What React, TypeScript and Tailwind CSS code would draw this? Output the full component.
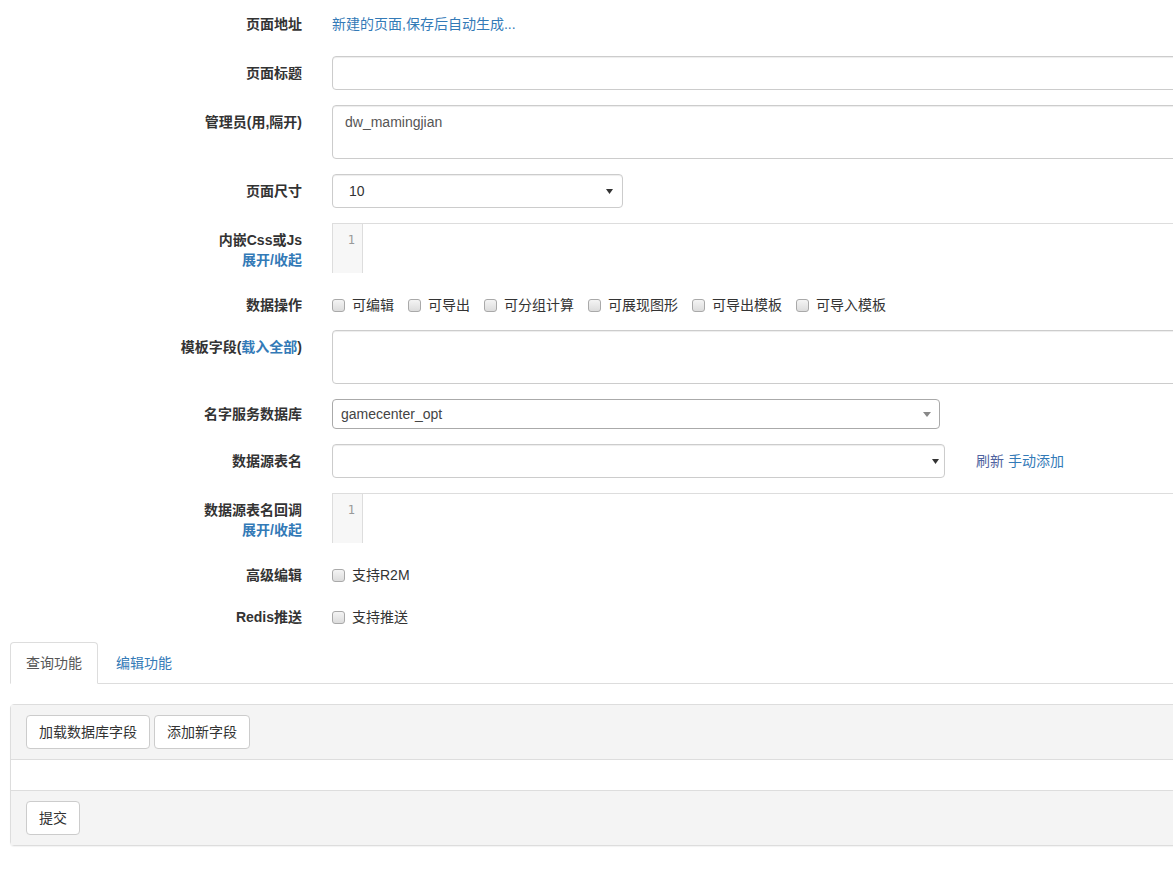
import React from "react";

const font = { fontFamily: '"Liberation Sans", "Noto Sans CJK SC", sans-serif' };

function Label({ children }: { children: React.ReactNode }) {
  return (
    <div className="w-[302px] shrink-0 pt-[7px] text-right text-[14px] font-bold leading-[20px] text-[#333]">
      {children}
    </div>
  );
}

function Row({ label, children }: { label: React.ReactNode; children: React.ReactNode }) {
  return (
    <div className="mb-[15px] flex">
      <Label>{label}</Label>
      <div className="ml-[30px] flex-1">{children}</div>
    </div>
  );
}

function Check({ text }: { text: string }) {
  return (
    <span className="flex items-center">
      <span className="h-[13px] w-[13px] rounded-[3px] border border-[#a9a9a9] bg-gradient-to-b from-[#f4f4f4] to-[#dcdcdc]" />
      <span className="ml-[7px] text-[14px] leading-[20px] text-[#333]">{text}</span>
    </span>
  );
}

function Editor() {
  return (
    <div className="flex h-[50px] border-l border-t border-[#ddd]">
      <div className="w-[30px] border-r border-[#ddd] bg-[#f7f7f7] pr-[7px] pt-[6px] text-right font-mono text-[12px] leading-[20px] text-[#999]" style={{ fontFamily: '"DejaVu Sans Mono", monospace' }}>
        1
      </div>
      <div className="flex-1 bg-white" />
    </div>
  );
}

function Arrow({ color, w = 8, h = 5 }: { color: string; w?: number; h?: number }) {
  return (
    <svg width={w} height={h} viewBox={`0 0 ${w} ${h}`}>
      <path d={`M0 0 L${w} 0 L${w / 2} ${h} Z`} fill={color} />
    </svg>
  );
}

const inputCls =
  "rounded-[4px] border border-[#ccc] bg-white shadow-[inset_0_1px_1px_rgba(0,0,0,0.075)]";

export default function App() {
  return (
    <div className="w-full overflow-hidden bg-white pb-[27px]" style={font}>
      <div className="w-[1200px] pt-[7px]">
        <Row label="页面地址">
          <div className="pt-[7px] pb-[7px] text-[14px] leading-[20px] text-[#337ab7]">新建的页面,保存后自动生成...</div>
        </Row>
        <Row label="页面标题">
          <div className={`${inputCls} h-[34px]`} />
        </Row>
        <Row label="管理员(用,隔开)">
          <div className={`${inputCls} h-[54px] px-[12px] py-[6px] text-[14px] leading-[20px] text-[#555]`}>dw_mamingjian</div>
        </Row>
        <Row label="页面尺寸">
          <div className={`${inputCls} flex h-[34px] w-[291px] items-center justify-between pl-[16px] pr-[9px] text-[14px] text-[#333]`}>
            <span>10</span>
            <Arrow color="#333" w={7} h={5} />
          </div>
        </Row>
        <Row
          label={
            <>
              <div>内嵌Css或Js</div>
              <div className="text-[#337ab7]">展开/收起</div>
            </>
          }
        >
          <Editor />
        </Row>
        <div className="mb-[15px] flex">
          <Label>数据操作</Label>
          <div className="ml-[30px] flex gap-[14px] pt-[7px]">
            {["可编辑", "可导出", "可分组计算", "可展现图形", "可导出模板", "可导入模板"].map((t) => (
              <Check key={t} text={t} />
            ))}
          </div>
        </div>
        <Row
          label={
            <>
              模板字段(<span className="text-[#337ab7]">载入全部</span>)
            </>
          }
        >
          <div className={`${inputCls} h-[54px]`} />
        </Row>
        <div className="mb-[15px] flex">
          <div className="w-[302px] shrink-0 pt-[5px] text-right text-[14px] font-bold leading-[20px] text-[#333]">名字服务数据库</div>
          <div className="ml-[30px]">
            <div className="flex h-[30px] w-[608px] items-center justify-between rounded-[4px] border border-[#aaa] bg-white pl-[8px] pr-[8px] text-[14px] text-[#444]">
              <span>gamecenter_opt</span>
              <Arrow color="#888" />
            </div>
          </div>
        </div>
        <Row label="数据源表名">
          <div className="flex items-center">
            <div className={`${inputCls} flex h-[34px] w-[613px] items-center justify-end pr-[5px]`}>
              <Arrow color="#333" w={7} h={5} />
            </div>
            <div className="ml-[31px] text-[14px] leading-[20px]">
              <span className="text-[#4f63a0]">刷新</span> <span className="text-[#337ab7]">手动添加</span>
            </div>
          </div>
        </Row>
        <Row
          label={
            <>
              <div>数据源表名回调</div>
              <div className="text-[#337ab7]">展开/收起</div>
            </>
          }
        >
          <Editor />
        </Row>
        <div className="mb-[15px] flex">
          <Label>高级编辑</Label>
          <div className="ml-[30px] flex pt-[7px]">
            <Check text="支持R2M" />
          </div>
        </div>
        <div className="mb-[15px] flex">
          <Label>Redis推送</Label>
          <div className="ml-[30px] flex pt-[7px]">
            <Check text="支持推送" />
          </div>
        </div>

        <div className="pl-[10px]">
          <div className="flex border-b border-[#ddd]">
            <div className="-mb-px rounded-t-[4px] border border-[#ddd] border-b-white bg-white px-[15px] py-[10px] text-[14px] leading-[20px] text-[#555]">
              查询功能
            </div>
            <div className="-mb-px ml-[2px] border border-transparent px-[15px] py-[10px] text-[14px] leading-[20px] text-[#337ab7]">
              编辑功能
            </div>
          </div>

          <div className="mt-[20px] rounded-[4px] border border-[#ddd] shadow-[0_1px_1px_rgba(0,0,0,0.05)]">
            <div className="flex gap-[4px] border-b border-[#ddd] bg-[#f4f4f4] px-[15px] py-[10px]">
              <button className="h-[34px] rounded-[4px] border border-[#ccc] bg-white px-[12px] text-[14px] text-[#333]">加载数据库字段</button>
              <button className="h-[34px] rounded-[4px] border border-[#ccc] bg-white px-[12px] text-[14px] text-[#333]">添加新字段</button>
            </div>
            <div className="h-[30px] bg-white" />
            <div className="border-t border-[#ddd] bg-[#f4f4f4] px-[15px] py-[10px]">
              <button className="h-[34px] rounded-[4px] border border-[#ccc] bg-white px-[12px] text-[14px] text-[#333]">提交</button>
            </div>
          </div>
        </div>
      </div>
    </div>
  );
}
